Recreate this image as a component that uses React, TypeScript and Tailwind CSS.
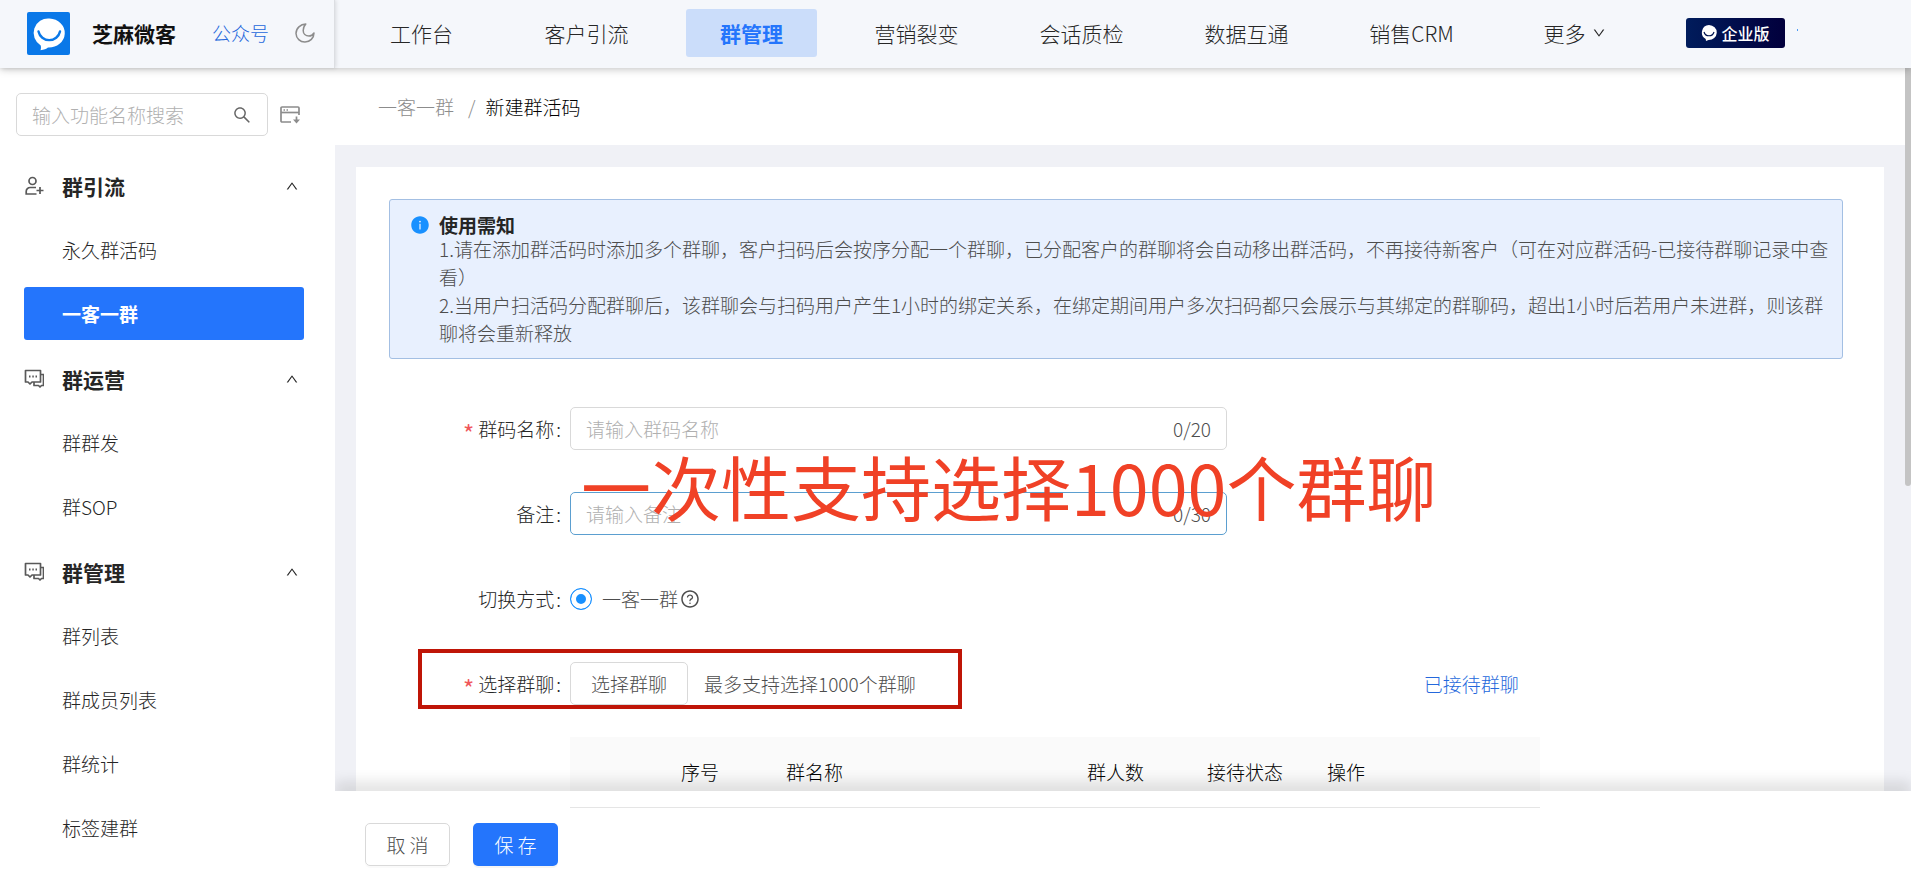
import { useState } from "react";
import {
  AiFillInfoCircle,
  AiOutlineDown,
  AiOutlineQuestionCircle,
  AiOutlineSearch,
  AiOutlineUp,
} from "react-icons/ai";

const navItems = [
  "工作台",
  "客户引流",
  "群管理",
  "营销裂变",
  "会话质检",
  "数据互通",
  "销售CRM",
];

const menu = [
  { title: "群引流", icon: "user", items: ["永久群活码", "一客一群"] },
  { title: "群运营", icon: "chat", items: ["群群发", "群SOP"] },
  {
    title: "群管理",
    icon: "chat",
    items: ["群列表", "群成员列表", "群统计", "标签建群"],
  },
];

function Logo() {
  return (
    <svg viewBox="0 0 43 43" className="h-[43px] w-[43px] shrink-0">
      <rect width="43" height="43" rx="2" fill="#0a78e8" />
      <path
        d="M22.500 6.500a16 14.500 0 1 1-1.500 29c-1.600 1.500-4 2.300-7.500 2.700.6-1.800.6-3.200.2-4.800a14.500 14.500 0 0 1 8.800-26.900z"
        fill="#fff"
      />
      <path
        d="M11.500 19.500a11 11 0 0 0 21.500 0"
        fill="none"
        stroke="#0a78e8"
        strokeWidth="2.400"
        strokeLinecap="round"
      />
    </svg>
  );
}

function MoonIcon() {
  return (
    <svg
      viewBox="0 0 20 20"
      className="h-5 w-5"
      fill="none"
      stroke="#8c8c8c"
      strokeWidth="1.500"
      strokeLinejoin="round"
    >
      <path d="M10.800 1C5.500 1.200 1 5.200 1 10.500a8.800 8.800 0 0 0 9 8.500c5 0 9-4 9-9-1.200 2-2.800 3-5 3-3.400 0-5.800-2.200-5.800-5.500 0-2.700 1-4.800 2.600-6.500z" />
    </svg>
  );
}

function PanelIcon() {
  return (
    <svg
      viewBox="0 0 20 18"
      className="h-[18px] w-5"
      fill="none"
      stroke="#8c8c8c"
      strokeWidth="1.700"
    >
      <path d="M11 16H2a1 1 0 0 1-1-1V2a1 1 0 0 1 1-1h16a1 1 0 0 1 1 1v7" />
      <path d="M1 6.500h18" />
      <path d="M3.500 4h1.500M6.500 4H8M16.500 10.500v5" />
      <path d="M13 13.500l3.500 4 3.500-4z" fill="#8c8c8c" stroke="none" />
    </svg>
  );
}

function UserPlusIcon() {
  return (
    <svg
      viewBox="0 0 20 20"
      className="h-5 w-5"
      fill="none"
      stroke="#595959"
      strokeWidth="1.700"
    >
      <circle cx="8.500" cy="5" r="3.500" />
      <path d="M12.500 18H2.200v-2.500a4 4 0 0 1 4-4H12" />
      <path d="M16 11v7M12.500 14.500h7" />
    </svg>
  );
}

function ChatIcon() {
  return (
    <svg
      viewBox="0 0 20 20"
      className="h-5 w-5"
      fill="none"
      stroke="#595959"
      strokeWidth="1.700"
      strokeLinejoin="round"
    >
      <path d="M1.500 1.500h15v11.500H8L6 15l-2-2H1.500z" />
      <path d="M16.500 5.500h3v11h-2L16 18l-1.500-1.500H10V13" />
      <path d="M5 7.500h1.500M8.300 7.500h1.500M11.500 7.500H13" strokeWidth="2" />
    </svg>
  );
}

function FormLabel({
  text,
  required,
  htmlFor,
}: {
  text: string;
  required?: boolean;
  htmlFor: string;
}) {
  return (
    <label
      htmlFor={htmlFor}
      className="flex w-[181px] shrink-0 items-center justify-end pr-[9px] text-[#262626]"
    >
      {required && (
        <span className="mr-1 mt-2 text-[24px] font-normal leading-6 text-[#f0565a]">
          *
        </span>
      )}
      {text}
      <span className="ml-0.5">:</span>
    </label>
  );
}

export default function App() {
  const [name, setName] = useState("");
  const [remark, setRemark] = useState("");

  return (
    <div className="flex h-screen flex-col overflow-hidden bg-white font-['Noto_Sans_CJK_SC','Noto_Sans',sans-serif] text-[19px] font-light leading-7 text-[#262626]">
      {/* header */}
      <header className="relative z-20 flex h-[68px] shrink-0 bg-[#f5f7fb] shadow-[0_1px_8px_rgba(0,0,0,0.25)]">
        <div className="flex w-[335px] shrink-0 items-center border-r border-[#dcdee2] pb-0.5 pl-[27px] shadow-[1px_0_4px_rgba(0,0,0,0.12)]">
          <Logo />
          <span className="ml-[22px] text-[21px] font-bold text-[#111]">
            芝麻微客
          </span>
          <a href="#" className="ml-9 text-[#2468dc]">
            公众号
          </a>
          <button aria-label="深色模式" className="ml-[26px]">
            <MoonIcon />
          </button>
        </div>

        <nav className="flex items-center pb-0.5 pl-1 text-[21px]">
          {navItems.map((item) => (
            <a
              key={item}
              href="#"
              className="flex w-[165px] justify-center"
            >
              <span
                className={
                  item === "群管理"
                    ? "flex h-12 w-[131px] items-center justify-center rounded-[3px] bg-[#cbddfa] font-bold text-[#2475fc]"
                    : ""
                }
              >
                {item}
              </span>
            </a>
          ))}
          <button className="flex w-[165px] items-center justify-center gap-1.5 pr-1">
            更多
            <AiOutlineDown className="h-3.5 w-3.5" />
          </button>
        </nav>

        <div className="ml-[27px] flex items-center gap-3">
          <span className="-mt-0.5 flex h-[30px] w-[99px] items-center justify-center gap-1 rounded-[3px] bg-gradient-to-r from-[#001c5c] to-[#02003c] text-base font-medium text-white">
            <svg viewBox="0 0 16 16" className="h-4 w-4">
              <path
                d="M8 0a8 7.500 0 1 1-.5 15l-2.500 1-.3-2A7.500 7.500 0 0 1 8 0z"
                fill="#fff"
              />
              <path
                d="M3 7a5.200 5.200 0 0 0 10 0"
                fill="none"
                stroke="#001450"
                strokeWidth="1.200"
              />
            </svg>
            企业版
          </span>
          <span className="mb-2 h-0.5 w-px bg-[#4c9bf5]" />
        </div>
      </header>

      <div className="flex min-h-0 flex-1">
        {/* sidebar */}
        <aside className="w-[335px] shrink-0 overflow-hidden bg-white">
          <div className="flex items-center gap-3 pl-4 pt-[25px]">
            <div className="flex h-[43px] w-[252px] items-center rounded-[5px] border border-[#d9d9d9] pl-[15px] pr-[15px]">
              <input
                aria-label="输入功能名称搜索"
                placeholder="输入功能名称搜索"
                className="w-full min-w-0 outline-none placeholder:text-[#b0b0b0]"
              />
              <AiOutlineSearch className="h-5 w-5 shrink-0 text-[#666]" />
            </div>
            <button aria-label="面板">
              <PanelIcon />
            </button>
          </div>

          <div className="mt-[23px] flex flex-col gap-3 pl-6 pr-[31px]">
            {menu.map((group) => (
              <div key={group.title} className="flex flex-col gap-[11px]">
                <button className="flex h-[53px] items-center pr-[5px]">
                  {group.icon === "user" ? <UserPlusIcon /> : <ChatIcon />}
                  <span className="ml-[18px] text-[21px] font-bold">
                    {group.title}
                  </span>
                  <AiOutlineUp className="ml-auto h-3.5 w-3.5" />
                </button>
                {group.items.map((item) => (
                  <a
                    key={item}
                    href="#"
                    className={
                      item === "一客一群"
                        ? "flex h-[53px] items-center rounded-[3px] bg-[#2475fc] pl-[38px] font-bold text-white"
                        : "flex h-[53px] items-center pl-[38px]"
                    }
                  >
                    {item}
                  </a>
                ))}
              </div>
            ))}
          </div>
        </aside>

        {/* content */}
        <div className="relative flex min-w-0 flex-1 flex-col overflow-hidden bg-[#f0f1f6]">
          <div className="flex h-[77px] shrink-0 items-center bg-white pl-[43px]">
            <a href="#" className="text-[#8c8c8c]">
              一客一群
            </a>
            <span className="ml-[14px] mr-[10px] text-[#8c8c8c]">/</span>
            <span className="text-black">新建群活码</span>
          </div>

          <main className="min-h-0 flex-1 overflow-hidden pl-[21px] pr-[27px] pt-[22px]">
            <div className="min-h-full bg-white pl-[33px] pr-[41px] pt-8">
              <div className="flex h-40 rounded-[3px] border border-[#a3bfe3] bg-[#e8f0fe] pl-5 pr-2 pt-[15px]">
                <AiFillInfoCircle className="h-5 w-5 shrink-0 text-[#1890ff]" />
                <div className="ml-[9px]">
                  <h2 className="font-bold leading-5">使用需知</h2>
                  <p className="text-[#4d4d4d]">
                    1.请在添加群活码时添加多个群聊，客户扫码后会按序分配一个群聊，已分配客户的群聊将会自动移出群活码，不再接待新客户（可在对应群活码-已接待群聊记录中查看）
                  </p>
                  <p className="text-[#4d4d4d]">
                    2.当用户扫活码分配群聊后，该群聊会与扫码用户产生1小时的绑定关系，在绑定期间用户多次扫码都只会展示与其绑定的群聊码，超出1小时后若用户未进群，则该群聊将会重新释放
                  </p>
                </div>
              </div>

              <form className="relative mt-12 flex flex-col gap-[42px]">
                <div className="flex h-[43px] items-center">
                  <FormLabel text="群码名称" required htmlFor="name" />
                  <div className="flex h-full w-[657px] items-center rounded-[5px] border border-[#d9d9d9] px-[15px]">
                    <input
                      id="name"
                      value={name}
                      maxLength={20}
                      onChange={(e) => setName(e.target.value)}
                      placeholder="请输入群码名称"
                      className="min-w-0 flex-1 outline-none placeholder:text-[#b0b0b0]"
                    />
                    <span className="text-[#4d4d4d]">{name.length}/20</span>
                  </div>
                </div>

                <div className="flex h-[43px] items-center">
                  <FormLabel text="备注" htmlFor="remark" />
                  <div className="flex h-full w-[657px] items-center rounded-[5px] border border-[#5b9fd0] px-[15px]">
                    <input
                      id="remark"
                      value={remark}
                      maxLength={30}
                      onChange={(e) => setRemark(e.target.value)}
                      placeholder="请输入备注"
                      className="min-w-0 flex-1 outline-none placeholder:text-[#b0b0b0]"
                    />
                    <span className="text-[#4d4d4d]">{remark.length}/30</span>
                  </div>
                </div>

                <div className="flex h-[43px] items-center">
                  <FormLabel text="切换方式" htmlFor="mode" />
                  <input
                    id="mode"
                    type="radio"
                    name="mode"
                    defaultChecked
                    className="h-[22px] w-[22px] appearance-none rounded-full border border-[#1890ff] bg-[#1890ff] shadow-[inset_0_0_0_5px_#fff]"
                  />
                  <label htmlFor="mode" className="ml-[10px] text-[#4d4d4d]">
                    一客一群
                  </label>
                  <AiOutlineQuestionCircle className="ml-0.5 h-5 w-5 text-[#4d4d4d]" />
                </div>

                <div className="relative flex h-[43px] items-center">
                  <FormLabel text="选择群聊" required htmlFor="pick" />
                  <button
                    id="pick"
                    type="button"
                    className="h-full w-[118px] rounded-[5px] border border-[#d9d9d9] text-[#4d4d4d]"
                  >
                    选择群聊
                  </button>
                  <span className="ml-4 text-[#4d4d4d]">
                    最多支持选择1000个群聊
                  </span>
                  <a href="#" className="ml-[508px] text-[#2468dc]">
                    已接待群聊
                  </a>
                  <div className="pointer-events-none absolute -top-[13px] left-[29px] h-[60px] w-[544px] border-4 border-[#bf1507]" />
                </div>

                <div className="pointer-events-none absolute left-[192px] top-[29px] whitespace-nowrap text-[70px] font-normal leading-[100px] text-[#f04126]">
                  一次性支持选择1000个群聊
                </div>
              </form>

              <table className="ml-[181px] mt-8 w-[970px] table-fixed bg-[#fafafa] text-left text-black">
                <colgroup>
                  <col className="w-[91px]" />
                  <col className="w-[105px]" />
                  <col className="w-[301px]" />
                  <col className="w-[120px]" />
                  <col className="w-[120px]" />
                  <col />
                </colgroup>
                <thead>
                  <tr className="h-[70px] border-b border-[#e8e8e8]">
                    <th></th>
                    {["序号", "群名称", "群人数", "接待状态", "操作"].map(
                      (col) => (
                        <th key={col} className="pl-5 font-light">
                          {col}
                        </th>
                      )
                    )}
                  </tr>
                </thead>
              </table>
            </div>
          </main>

          {/* bottom actions */}
          <footer className="relative z-10 flex h-[103px] shrink-0 gap-[23px] bg-white pl-[30px] pt-8 shadow-[0_-10px_12px_rgba(0,0,0,0.1)]">
            <div className="absolute left-[235px] top-4 h-px w-[970px] bg-[#e5e5e5]" />
            <button className="h-[43px] w-[85px] rounded-[5px] border border-[#d9d9d9] text-[#4d4d4d] shadow-[0_2px_0_rgba(0,0,0,0.02)]">
              取 消
            </button>
            <button className="h-[43px] w-[85px] rounded-[5px] bg-[#2475fc] text-white shadow-[0_2px_0_rgba(0,0,0,0.04)]">
              保 存
            </button>
          </footer>

          {/* scrollbar thumb */}
          <div className="absolute right-0 top-0 h-[418px] w-1.5 rounded-b-[3px] bg-[#c4c4c4]" />
        </div>
      </div>
    </div>
  );
}
